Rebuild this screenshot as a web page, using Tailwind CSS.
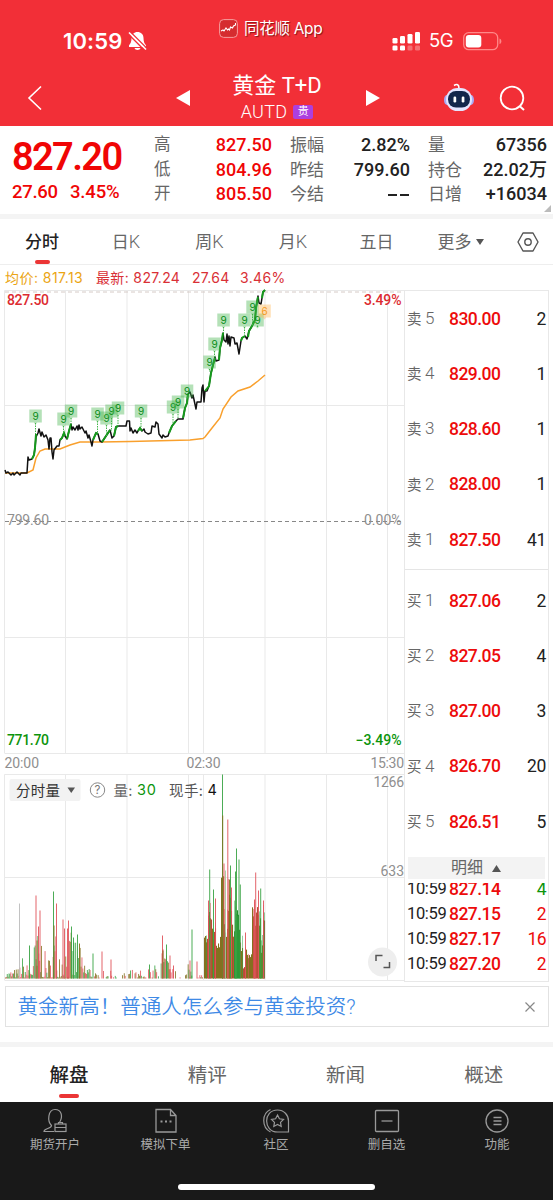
<!DOCTYPE html>
<html lang="zh-CN">
<head>
<meta charset="utf-8">
<title>黄金 T+D</title>
<script src="https://cdn.jsdelivr.net/npm/@tailwindcss/browser@4"></script>
</head>
<body class="w-[553px] h-[1200px] overflow-hidden bg-white font-['Roboto','Noto_Sans_CJK_SC',sans-serif] text-[#222]">
<header class="h-[126px] bg-[#f22f37] text-white flex flex-col">
  <div class="h-[70px] pt-[12px] flex items-center font-['Inter','Noto_Sans_CJK_SC',sans-serif]">
    <div class="w-[219px] pl-[63px] flex items-center">
      <span class="text-[22px] font-semibold w-[60px] tracking-[0.150px] whitespace-nowrap">10:59</span>
      <svg class="ml-[5px]" width="19" height="20" viewBox="0 0 19 20"><path d="M9.500 1C6 1 3.500 3.500 3.500 7c0 4-1 5.500-2.500 7.200V16h17v-1.800C16.500 12.500 15.500 11 15.500 7c0-3.500-2.500-6-6-6z" fill="#fff"/><path d="M6.500 17h6c-.5 2.600-5.500 2.600-6 0z" fill="#fff"/><path d="M2.500 1l17 17" stroke="#f22f37" stroke-width="1.500"/><path d="M-.2 2.500l17 17" stroke="#f22f37" stroke-width="1.500"/><path d="M1 1.500l17 17" stroke="#fff" stroke-width="1.600"/></svg>
    </div>
    <div class="flex items-center w-[172px] pb-[25px]">
      <svg width="19" height="19" viewBox="0 0 19 19"><rect x=".6" y=".6" width="17.800" height="17.800" rx="4" fill="#d52c2f" stroke="#f79d9d" stroke-width="1"/><path d="M2 12l2-1 1 1 2-3 1.500 2 1-1 1 1 1-3 2 1 1-2 2-1V4" fill="none" stroke="#fff" stroke-width="1.100"/></svg>
      <span class="ml-[6px] text-[15.5px] tracking-[-0.3px] [text-shadow:1px_1px_1px_rgba(60,0,0,.6)] whitespace-nowrap">同花顺 App</span>
    </div>
    <svg width="30" height="20" viewBox="0 0 30 20"><g fill="#fff"><rect x="1.500" y="7" width="5" height="5.500" rx="1.300"/><rect x="9" y="5" width="5" height="7.500" rx="1.300"/><rect x="16.500" y="3" width="5" height="9.500" rx="1.300"/><rect x="24" y="1" width="5" height="11.500" rx="1.300"/><rect x="1.500" y="14.500" width="5" height="5" rx="1.300"/><rect x="9" y="14.500" width="5" height="5" rx="1.300"/></g><g fill="#fff" opacity=".3"><rect x="16.500" y="14.500" width="5" height="5" rx="1.300"/><rect x="24" y="14.500" width="5" height="5" rx="1.300"/></g></svg>
    <span class="ml-[8px] w-[26px] text-[18.500px] tracking-[-0.4px]">5G</span>
    <svg class="ml-[8px]" width="40" height="19" viewBox="0 0 40 19"><rect x=".7" y=".7" width="34" height="17" rx="5" fill="none" stroke="#f88" stroke-width="1.300"/><path d="M36.500 6.500c2.500.6 2.500 5 0 5.600z" fill="#f88"/><rect x="2.800" y="3" width="15.500" height="12.500" rx="3" fill="#fff"/></svg>
  </div>
  <div class="h-[56px] flex items-center">
    <svg class="ml-[27px]" width="16" height="26" viewBox="0 0 16 26"><path d="M14 1.500L2 13l12 11.500" fill="none" stroke="#fff" stroke-width="1.600"/></svg>
    <svg class="ml-[133px]" width="14" height="16" viewBox="0 0 14 16"><path d="M0 8L14 0v16z" fill="#fff"/></svg>
    <div class="w-[174px] mr-[2px] flex flex-col items-center pb-[3px]">
      <div class="text-[22px] leading-[30px]">黄金 T+D</div>
      <div class="flex items-center leading-[22px] text-[18px] gap-[6px]"><span class="font-light tracking-[0.300px]">AUTD</span><span class="w-[20px] h-[14px] bg-[#ac3fdf] rounded-[2px] text-[11px] leading-[14px] text-center">贵</span></div>
    </div>
    <svg width="14" height="16" viewBox="0 0 14 16"><path d="M14 8L0 0v16z" fill="#fff"/></svg>
    <svg class="ml-[63px]" width="32" height="30" viewBox="0 0 32 30"><path d="M11 2.500c3-2 5-1 5 3" fill="none" stroke="#fff" stroke-width="1.600"/><ellipse cx="4" cy="17" rx="3" ry="5" fill="#a9a9f4"/><ellipse cx="28" cy="17" rx="3" ry="5" fill="#a9a9f4"/><rect x="3" y="5" width="26" height="23" rx="11.500" fill="#e4e5ff"/><rect x="5" y="8" width="22" height="16.500" rx="8" fill="#13264b"/><rect x="10.500" y="13.500" width="2.700" height="6" rx="1.200" fill="#fff"/><rect x="18.700" y="13.500" width="2.700" height="6" rx="1.200" fill="#fff"/></svg>
    <svg class="ml-[24px]" width="28" height="27" viewBox="0 0 28 27"><circle cx="13" cy="13" r="11.300" fill="none" stroke="#fff" stroke-width="1.800"/><path d="M20.500 21l4.500 4" stroke="#fff" stroke-width="2"/></svg>
  </div>
</header>

<section class="relative h-[88px] flex pt-[7px] text-[18px] leading-[24.500px] font-medium">
  <div class="w-[142px] pl-[12px] text-[#f00505] whitespace-nowrap">
    <div class="text-[38px] leading-[48px] font-semibold tracking-[-1.650px]">827.20</div>
    <div class="flex text-[18.500px] tracking-[-0.150px] leading-[23px]"><span class="w-[58px] tracking-[-0.300px]">27.60</span><span>3.45%</span></div>
  </div>
  <div class="ml-[12px] w-[118px] grid grid-cols-[auto_1fr] grid-rows-[24.500px_24.500px_24.500px] content-start"><span class="text-[#666] text-[16.500px] font-normal">高</span><b class="font-medium text-right text-[#f00505]">827.50</b><span class="text-[#666] text-[16.500px] font-normal">低</span><b class="font-medium text-right text-[#f00505]">804.96</b><span class="text-[#666] text-[16.500px] font-normal">开</span><b class="font-medium text-right text-[#f00505]">805.50</b></div>
  <div class="ml-[18px] w-[120px] grid grid-cols-[auto_1fr] grid-rows-[24.500px_24.500px_24.500px] content-start"><span class="text-[#666] text-[17px] font-normal">振幅</span><b class="font-medium text-right">2.82%</b><span class="text-[#666] text-[17px] font-normal">昨结</span><b class="font-medium text-right">799.60</b><span class="text-[#666] text-[17px] font-normal">今结</span><b class="font-medium text-right"><i class="inline-block w-[9px] h-[2px] bg-[#222] align-middle"></i><i class="inline-block w-[9px] h-[2px] bg-[#222] align-middle ml-[3px] mr-[1px]"></i></b></div>
  <div class="ml-[18px] w-[119px] grid grid-cols-[auto_1fr] grid-rows-[24.500px_24.500px_24.500px] content-start"><span class="text-[#666] text-[17px] font-normal">量</span><b class="font-medium text-right">67356</b><span class="text-[#666] text-[17px] font-normal">持仓</span><b class="font-medium text-right">22.02万</b><span class="text-[#666] text-[17px] font-normal">日增</span><b class="font-medium text-right">+16034</b></div>
  <svg class="absolute right-[2px] bottom-[2px]" width="7" height="7" viewBox="0 0 7 7"><path d="M7 0v7H0z" fill="#bbb"/></svg>
</section>
<div class="h-[5px] bg-[#f4f4f4]"></div>

<nav class="h-[46px] flex border-b border-[#eee] text-[17px] font-normal text-[#666] leading-[46px] text-center">
  <div class="w-[84px] font-medium text-[#222] flex flex-col items-center"><span class="h-[41px]">分时</span><i class="w-[15px] h-[4px] rounded-full bg-[#eb3535]"></i></div>
  <div class="w-[84px]">日<span class="font-light text-[18px]">K</span></div><div class="w-[83px]">周<span class="font-light text-[18px]">K</span></div><div class="w-[84px]">月<span class="font-light text-[18px]">K</span></div><div class="w-[83px]">五日</div>
  <div class="w-[85px] flex items-center justify-center gap-[4px]">更多<svg width="8" height="6" viewBox="0 0 8 6"><path d="M0 0h8L4 6z" fill="#555"/></svg></div>
  <div class="w-[50px] flex items-center justify-center"><svg width="22" height="20" viewBox="0 0 22 20"><path d="M6 1h10l5 9-5 9H6L1 10z" fill="none" stroke="#555" stroke-width="1.400" stroke-linejoin="round"/><circle cx="11" cy="10" r="3.200" fill="none" stroke="#555" stroke-width="1.400"/></svg></div>
</nav>
<div class="h-[24px] pl-[5px] flex items-center text-[14px] text-[#d93036] font-['Inter','Noto_Sans_CJK_SC',sans-serif] whitespace-nowrap"><span class="w-[91px] text-[#eba514] tracking-[0.450px]">均价: 817.13</span><span class="w-[96px] tracking-[0.350px]">最新: 827.24</span><span class="w-[48px] tracking-[0.300px]">27.64</span><span class="tracking-[0.350px]">3.46%</span></div>

<main class="h-[693px] flex">
  <svg id="chart" class="shrink-0" width="404" height="693" viewBox="0 289 404 693">
    <g fill="none" stroke="#e9e9e9" stroke-width="1">
      <path d="M4.500 290.500H404M4.500 405.500H404M4.500 637.500H404M4.500 753.500H404M4.500 774.500H404M4.500 877.500H404M4.500 980.500H404"/>
      <path d="M4.500 290.500V753M65.500 290.500V753M127 290.500V753M188.500 290.500V753M203.500 290.500V753M265 290.500V753M326.500 290.500V753M387.500 290.500V753"/>
      <path d="M4.500 774.500V980M65.500 774.500V980M127 774.500V980M188.500 774.500V980M203.500 774.500V980M265 774.500V980M326.500 774.500V980M387.500 774.500V980"/>
    </g>
    <path d="M5 292H402" stroke="#d5cac6" stroke-dasharray="4 3"/>
    <path d="M5 521.500H402" stroke="#888" stroke-dasharray="4 3"/>
    <g id="volume"></g>
    <path d="M5 473H27L33 470 36 458 40 451 45 449H60L70 445 80 442H100L130 441.500 190 440 203 438.500 205 437 212 428 220 418 223 409 231 397 238 391 250 387 258 381 265 375" fill="none" stroke="#f9a02d" stroke-width="1.500"/>
    <path d="M5 470L6 473 8 472 11 475 13 473 14 475 17 472 20 475 21 473 27 473 28 457 29 460 32 459 34 455 35 448 36 437 37 435 38 433 39 429 41 436 42 432 44 437 46 435 48 440 49 449 50 438 51 438 52 452 53 459 54 450 57 446 59 446 60 440 62 438 64 433 65 436 67 439 69 431 71 424 72 430 73 427 75 430 77 426 78 430 79 425 80 429 82 427 85 433 86 431 88 438 89 435 91 442 92 446 93 440 96 433 98 434 100 441 102 442 106 436 110 430 112 438 114 436 116 427 118 426H126L127 421H129.500L130 431 131 428 133 433 135 430 137 433 138 431 140 428 142 431 144 429 145 432 148 434 151 433 152 426 155 427 156 422 158 424 159 434 162 438 163 435 165 437 168 436 169 433 172 426 176 421 178 419H183L185 408 187 403 188 394 190 392 192 398 193 395 196 409 197 402 201 402 202 388 203 385 204 402 205 391 207 391 209 386 211 373 213 365 215 357 216 361 219 360 220 348 222 340 223 333 224 340 226 342 227 334 228 344 229 336 230 346 231 337 234 338 235 344 237 343 239 354 241 341 242 338 245 336 247 339 249 331 252 326 255 320 256 308 258 296 259 303 261 304 262 298 263 292 265 290" fill="none" stroke="#111" stroke-width="1.500" stroke-linejoin="round"/>
    <path d="M32 459L34 455 35 448 36 434M60 440L62 438 64 433 65 436M67 439L69 431 71 424M93 440L96 433 98 434M102 442L106 436 110 430M114 436L116 427 118 426M138 431L140 428 142 431M169 433L172 426 176 421M183 418L185 408 187 403 188 394M205 391L209 386 211 373 213 365 215 358M219 360L220 348 222 340 223 333M241 341L242 338 245 336M248 337L249 331 252 326 255 320 256 308 258 297M262 298L263 292 265 290" fill="none" stroke="#159a1c" stroke-width="2"/>
    <g id="flags" font-family="Inter" font-size="10" font-weight="400" text-anchor="middle"></g>
    <g font-family="Roboto" font-size="14" font-weight="500">
      <g fill="#dc2b30"><text x="7" y="304.500" textLength="42">827.50</text><text x="364" y="304.500" textLength="37.500">3.49%</text></g>
      <g fill="#8f8f8f" font-weight="400"><text x="7" y="524.500" textLength="42">799.60</text><text x="364" y="524.500" textLength="37.500">0.00%</text><text x="4.500" y="768" textLength="34.500">20:00</text><text x="186.500" y="768" textLength="34">02:30</text><text x="370.500" y="768" textLength="33.500">15:30</text><text x="373.500" y="786.500" textLength="30.500">1266</text><text x="380.500" y="876" textLength="23.500">633</text></g>
      <g fill="#0c940c"><text x="7" y="744.500" textLength="42">771.70</text><text x="355.500" y="744.500" textLength="46">−3.49%</text></g>
    </g>
    <rect x="9.500" y="779" width="71" height="22" rx="2" fill="#f2f2f2"/>
    <path d="M67.500 787.500h7.500L71.250 793z" fill="#555"/>
    <circle cx="97.500" cy="790" r="7.200" fill="none" stroke="#888"/>
    <g font-family="Inter,'Noto Sans CJK SC',sans-serif" font-size="14.500">
      <text x="16" y="795.500" textLength="44" fill="#333">分时量</text>
      <text x="97.500" y="794.200" font-size="11.500" text-anchor="middle" fill="#777">?</text>
      <text x="113.500" y="795.500" fill="#666" textLength="19">量:</text><text x="137" y="795" fill="#0c940c" textLength="19">30</text>
      <text x="169" y="795.500" fill="#555" textLength="34">现手:</text><text x="207.500" y="795" fill="#111">4</text>
    </g>
    <circle cx="382.500" cy="962" r="14.500" fill="#eee"/>
    <path d="M376 961v-5.500h6.500M383.500 967.500h6V962" fill="none" stroke="#555" stroke-width="1.500"/>
  </svg>
  <aside class="w-[145px] h-[692px] border-y border-x border-[#e8e8e8] mt-[1px] flex flex-col">
    <div id="asks" class="h-[279px] border-b border-[#e5e5e5]"></div>
    <div id="bids" class="h-[287px] pt-[3px]"></div>
    <div class="mx-[3px] h-[22px] shrink-0 bg-[#f3f3f3] flex items-center justify-center gap-[9px] pr-[1px] text-[16px] font-normal text-[#666]">明细<svg width="9" height="7" viewBox="0 0 9 7"><path d="M0 7h9L4.500 0z" fill="#555"/></svg></div>
    <div class="mt-[4px] h-[95px] overflow-hidden"><div id="ticks" class="-mt-[6px]"></div></div>
  </aside>
</main>

<div class="mt-[4px] mx-[4.500px] h-[41px] border border-[#e2e2e2] flex items-center pl-[12px] pr-[13px] justify-between text-[#3f8ae6]"><span class="text-[20.500px] font-[350] pt-[1px] tracking-[0.050px] whitespace-nowrap">黄金新高！普通人怎么参与黄金投资?</span><svg width="10" height="10" viewBox="0 0 10 10"><path d="M.5.5l9 9m0-9l-9 9" stroke="#888" stroke-width="1.200"/></svg></div>
<div class="mt-[15px] h-[5px] bg-[#f4f4f4]"></div>
<nav class="h-[55px] grid grid-cols-4 text-center text-[19.500px] leading-[57px] font-normal text-[#666]">
  <div class="font-medium text-[#222] flex flex-col items-center"><span class="h-[47px]">解盘</span><i class="w-[20px] h-[4px] rounded-full bg-[#eb3535]"></i></div><div>精评</div><div>新闻</div><div>概述</div>
</nav>
<footer class="h-[98px] bg-[#191919] text-[#aaa] text-[12.500px]">
  <div class="flex h-[80px] pt-[6px] text-center leading-[18px]">
    <div class="w-[110px] flex flex-col items-center gap-[2px]"><svg width="24" height="26" viewBox="0 0 24 26" fill="none" stroke="#999" stroke-width="1.200"><path d="M11 23.500H1c0-3.500 7.500-2.500 7.500-6C4 13 5 1.500 12 1.500S20 9 16.500 14.500"/><rect x="12" y="16" width="11" height="7.500"/><path d="M12 19.500h11M15.500 16v-1.500h4V16"/></svg>期货开户</div>
    <div class="w-[111px] flex flex-col items-center gap-[2px]"><svg width="24" height="26" viewBox="0 0 24 26" fill="none" stroke="#999" stroke-width="1.300"><path d="M2 1.500h14.500l5.500 6V24H2zM16.500 1.500v6H22"/><path d="M6.500 13.500h2M11 13.500h2M15.500 13.500h2" stroke-width="2"/></svg>模拟下单</div>
    <div class="w-[110px] flex flex-col items-center gap-[2px]"><svg width="28" height="26" viewBox="0 0 28 26" fill="none" stroke="#999" stroke-width="1.200"><path d="M8.500 1.500c-9 4-9 18 0 22.500M26.500 24H15.500C1 24 1 2 15.500 2c6.500 0 11 5 11 11z"/><path d="M15.500 7l1.900 3.800 4.100.6-3 3 .7 4.100-3.700-2-3.700 2 .7-4.100-3-3 4.100-.6z"/></svg>社区</div>
    <div class="w-[111px] flex flex-col items-center gap-[2px]"><svg width="26" height="26" viewBox="0 0 26 26" fill="none" stroke="#999" stroke-width="1.300"><rect x="1.500" y="2.500" width="23" height="21" rx="1"/><path d="M7.500 13h11"/></svg>删自选</div>
    <div class="w-[110px] flex flex-col items-center gap-[2px]"><svg width="26" height="26" viewBox="0 0 26 26" fill="none" stroke="#999" stroke-width="1.300"><circle cx="13" cy="13" r="11"/><path d="M9.500 9.500h8M9.500 13h8M9.500 16.500h8"/></svg>功能</div>
  </div>
  <div class="mx-auto w-[197px] h-[6px] mt-[2px] rounded-full bg-white"></div>
</footer>

<script>
const row = (label, price, qty) => `<div class="h-[55.300px] flex items-center pl-[2px] pr-[2px] text-[17.500px] tracking-[-0.350px] whitespace-nowrap"><span class="w-[42px] text-[14.500px] font-normal text-[#666] tracking-normal">${label[0]} <span class="text-[17px] font-light">${label[1]}</span></span><span class="font-medium text-[#ed0b0b] tracking-[-0.550px]">${price}</span><span class="ml-auto">${qty}</span></div>`;
asks.innerHTML = [['卖5','830.00',2],['卖4','829.00',1],['卖3','828.60',1],['卖2','828.00',1],['卖1','827.50',41]].map(r => row(...r)).join('');
bids.innerHTML = [['买1','827.06',2],['买2','827.05',4],['买3','827.00',3],['买4','826.70',20],['买5','826.51',5]].map(r => row(...r)).join('');
ticks.innerHTML = [['827.14',4,'text-[#0c940c]'],['827.15',2,'text-[#ed0b0b]'],['827.17',16,'text-[#ed0b0b]'],['827.20',2,'text-[#ed0b0b]']].map(([p,q,c]) => `<div class="h-[25px] flex items-center px-[2px] text-[17.500px] tracking-[-0.550px]"><span class="w-[42px] text-[16.500px] tracking-[-0.350px]">10:59</span><span class="font-medium text-[#ed0b0b]">${p}</span><span class="ml-auto ${c}">${q}</span></div>`).join('');

flags.innerHTML = [[35.5,416,434],[63.5,419,433],[71,411,424],[97.5,414,433],[106.5,418,436],[111.5,411,431],[118,408,426],[141,411,428],[173,407,424],[178,402,419],[187,391,395],[209.5,362,372],[214.5,344,357],[223.5,320,333],[244.5,320,336],[252.5,307,325],[257.5,320,325],[264.5,311,318]].map(([x,y,b],i) => {
  const six = i === 17, box = six ? '#ffb450' : '#43b54a', ink = six ? '#f79a20' : '#078c17';
  return `<path d="M${x} ${y+7}V${b}" stroke="${box}" stroke-dasharray="1.5 1"/><path d="M${x-6.2} ${y-6.5}h12.500v13h-4.500l-1.800 2-1.800-2h-4.400z" fill="${box}" opacity=".4"/><text x="${x}" y="${y+3.600}" fill="${ink}">${six ? 6 : 9}</text>`;
}).join('');

// Volume bars: [x, height, colour] peaks over a seeded spread of minute bars.
const base = 978.5, R = '#e0525a', G = '#38a344', O = '#84701f';
let seed = 7; const rnd = () => (seed = seed * 16807 % 2147483647) / 2147483647;
const bar = (x, h, c, w = 1, o = 1) => `<rect x="${x}" y="${base - h}" width="${w}" height="${h}" fill="${c}" opacity="${o}"/>`;
const env = [[5,6],[18,10],[22,22],[27,14],[32,24],[35,45],[41,50],[45,24],[51,20],[53,60],[57,48],[62,40],[69,46],[76,44],[82,22],[88,16],[94,6],[108,8],[120,3],[132,8],[148,10],[156,14],[161,38],[167,24],[170,10],[182,6],[189,16],[199,3],[203.5,4]];
const at = x => { for (let i = 1; i < env.length; i++) if (x <= env[i][0]) { const [a,p] = env[i-1], [b,q] = env[i]; return p + (q-p)*(x-a)/(b-a); } return 3; };
let v = '';
for (let x = 5; x < 204; x += .9) {
  const sparse = x > 92 && x < 160 || x > 171;
  if (sparse && rnd() < .5) continue;
  const r = rnd(), c = rnd();
  v += bar(x, 1 + at(x) * r * r, c < .36 ? R : c < .64 ? G : O, .9, .9);
}
const floor = [[204,40],[208,60],[212,48],[216,35],[219,38],[221,105],[224,62],[226,55],[228,88],[232,50],[234,62],[238,66],[240,34],[243,12],[245,28],[248,24],[251,22],[252,64],[255,68],[258,58],[261,34],[263,58]];
floor.forEach(([x,h],i) => {
  const end = i + 1 < floor.length ? floor[i+1][0] : 265;
  for (let p = x; p < end; p += 1) { const c = rnd(); const tint = (x > 222 && x < 226 || x > 232 && x < 240) ? (c < .7 ? '#23902d' : O) : x > 248 ? (c < .5 ? '#bb4c38' : O) : (c < .75 ? O : '#bb4c38'); v += bar(p, h * (.72 + rnd() * .4), tint, 1.05); if (rnd() < .45) v += bar(p, h * (1 + rnd() * .3), rnd() < .5 ? R : G, .8, .65); }
});
[[19,75,'#bbb'],[29,33,G],[35.500,83,R],[38,52,R],[39.500,68,R],[36.500,38,O],[53,87,G],[53.500,53,O],[56,75,R],[62.500,59,R],[64,50,R],[68,58,R],[67,50,R],[71,52,G],[73,41,G],[77,44,G],[79,35,O],[92.500,25,G],[101.500,27,R],[110.500,19,R],[149,14,G],[162,43,R],[162.500,28,O],[166,34,G],[169.500,23,R],[173,13,R],[191.500,49,G],[189.500,18,R],[196.500,17,R],[209.200,109,G],[208,78,R],[213,89,G],[215,80,R],[222,204,G],[222.200,163,O],[223.500,115,R],[225,108,'#a8c69a'],[227.300,159,R],[230,113,G],[229,99,O],[231,91,R],[236,130,G],[235,107,G],[238.500,119,G],[239.800,94,G],[245,46,R],[255.200,106,R],[254,79,R],[258,88,R],[260.200,90,G],[263,78,R]].forEach(b => v += bar(b[0], b[1], b[2], 1, .9));
volume.innerHTML = v;
</script>
</body>
</html>
